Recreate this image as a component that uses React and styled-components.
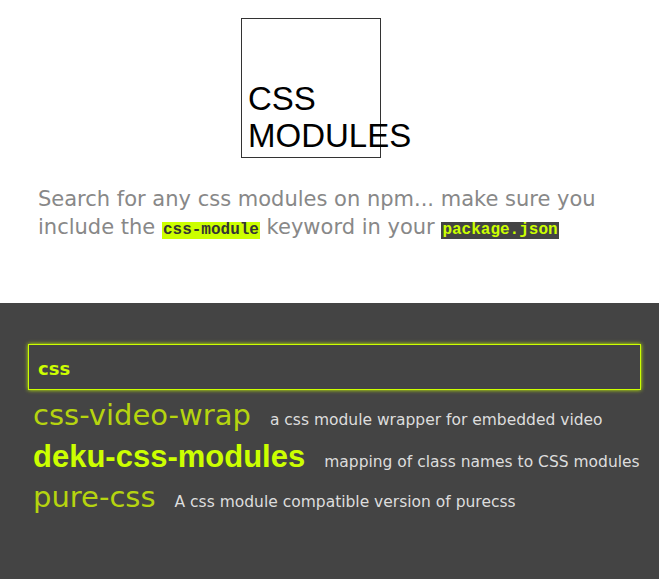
import React from 'react';
import styled, { createGlobalStyle } from 'styled-components';

const Global = createGlobalStyle`
    html, body {
        margin: 0;
        padding: 0;
        background: #444;
    }
    body {
        font-family: 'DejaVu Sans', 'Liberation Sans', sans-serif;
    }
`;

const Top = styled.header`
    background: #fff;
    height: 303px;
    padding: 18px 0 0 38px;
    box-sizing: border-box;
`;

const Logo = styled.div`
    width: 140px;
    height: 140px;
    margin-left: 203px;
    box-sizing: border-box;
    border: 1px solid #333;
    padding: 0 6px 3px;
    display: flex;
    flex-direction: column;
    justify-content: flex-end;
    font-family: 'Liberation Sans', Arial, sans-serif;
    font-size: 33px;
    line-height: 37px;
    color: #000;
    white-space: nowrap;
`;

const Intro = styled.p`
    margin: 27px 0 0;
    max-width: 575px;
    font-size: 21px;
    line-height: 28px;
    color: #888;
`;

const Code = styled.code`
    display: inline-block;
    font-family: 'Liberation Mono', 'Courier New', monospace;
    font-weight: bold;
    font-size: 16px;
    line-height: 17px;
    padding: 0 1px;
    background: ${p => (p.dark ? '#444' : '#ccff00')};
    color: ${p => (p.dark ? '#ccff00' : '#333')};
`;

const Bottom = styled.main`
    background: #444;
    padding: 41px 18px 40px 28px;
    min-height: 276px;
    box-sizing: border-box;
`;

const Search = styled.input`
    display: block;
    width: 100%;
    height: 46px;
    box-sizing: border-box;
    background: transparent;
    border: 1px solid #ccff00;
    box-shadow: 0 0 4px #ccff00;
    outline: none;
    padding: 2px 9px 0;
    font-family: 'DejaVu Sans', sans-serif;
    font-size: 18px;
    font-weight: bold;
    color: #ccff00;
`;

const Results = styled.ul`
    list-style: none;
    margin: 5px 0 0;
    padding: 0 0 0 5px;
`;

const Result = styled.li`
    display: flex;
    align-items: baseline;
    gap: 19px;
    height: 41px;
    line-height: 41px;
    white-space: nowrap;
`;

const Name = styled.span`
    font-family: ${p => (p.hot ? "'Liberation Sans', Arial" : "'DejaVu Sans'")}, sans-serif;
    font-size: ${p => (p.hot ? '31px' : '29px')};
    font-weight: ${p => (p.hot ? 'bold' : 'normal')};
    color: ${p => (p.hot ? '#ccff00' : '#b6d40f')};
`;

const Desc = styled.span`
    font-size: 15.5px;
    color: #ddd;
`;

const modules = [
    { name: 'css-video-wrap', desc: 'a css module wrapper for embedded video' },
    { name: 'deku-css-modules', desc: 'mapping of class names to CSS modules', hot: true },
    { name: 'pure-css', desc: 'A css module compatible version of purecss' },
];

export default function App() {
    return (
        <>
            <Global />
            <Top>
                <Logo>
                    <div>CSS</div>
                    <div>MODULES</div>
                </Logo>
                <Intro>
                    Search for any css modules on npm... make sure you include the{' '}
                    <Code>css-module</Code> keyword in your <Code dark>package.json</Code>
                </Intro>
            </Top>
            <Bottom>
                <Search defaultValue="css" />
                <Results>
                    {modules.map(m => (
                        <Result key={m.name}>
                            <Name hot={m.hot}>{m.name}</Name>
                            <Desc>{m.desc}</Desc>
                        </Result>
                    ))}
                </Results>
            </Bottom>
        </>
    );
}
